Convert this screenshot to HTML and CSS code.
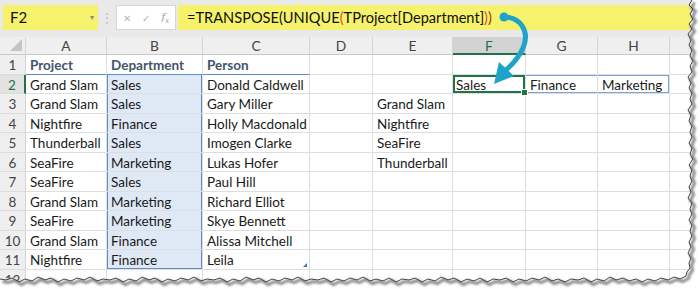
FILE: index.html
```html
<!DOCTYPE html>
<html lang="en">
<head>
  <meta charset="UTF-8" />
  <title>TRANSPOSE UNIQUE</title>
  <link rel="stylesheet" href="styles.css">
</head>
<body>
  <div class="window">
    <!-- Formula bar -->
    <div class="toolbar">
      <div class="namebox">F2<span class="caret">&#9662;</span></div>
      <div class="grip">&#8942;</div>
      <div class="fxbox">
        <span>&#10005;</span>
        <span>&#10003;</span>
        <span class="fx">f<sub>x</sub></span>
      </div>
      <div class="formula">=TRANSPOSE(UNIQUE<span class="p1">(</span>TProject[Department]<span class="p1">)</span><span class="p0">)</span></div>
    </div>

    <!-- Sheet -->
    <div class="sheet">
      <div class="hd corner"></div>
      <div class="hd">A</div><div class="hd">B</div><div class="hd">C</div><div class="hd">D</div>
      <div class="hd">E</div><div class="hd active">F</div><div class="hd">G</div><div class="hd">H</div><div class="hd"></div>

      <div class="rn">1</div>
      <div class="c th">Project</div><div class="c th">Department</div><div class="c th">Person</div>
      <div class="c"></div><div class="c"></div><div class="c"></div><div class="c"></div><div class="c"></div><div class="c"></div>

      <div class="rn active">2</div>
      <div class="c">Grand Slam</div><div class="c dep">Sales</div><div class="c">Donald Caldwell</div>
      <div class="c"></div><div class="c"></div><div class="c cur">Sales</div><div class="c spill">Finance</div><div class="c spill end">Marketing</div><div class="c"></div>

      <div class="rn">3</div>
      <div class="c">Grand Slam</div><div class="c dep">Sales</div><div class="c">Gary Miller</div>
      <div class="c"></div><div class="c">Grand Slam</div><div class="c"></div><div class="c"></div><div class="c"></div><div class="c"></div>

      <div class="rn">4</div>
      <div class="c">Nightfire</div><div class="c dep">Finance</div><div class="c">Holly Macdonald</div>
      <div class="c"></div><div class="c">Nightfire</div><div class="c"></div><div class="c"></div><div class="c"></div><div class="c"></div>

      <div class="rn">5</div>
      <div class="c">Thunderball</div><div class="c dep">Sales</div><div class="c">Imogen Clarke</div>
      <div class="c"></div><div class="c">SeaFire</div><div class="c"></div><div class="c"></div><div class="c"></div><div class="c"></div>

      <div class="rn">6</div>
      <div class="c">SeaFire</div><div class="c dep">Marketing</div><div class="c">Lukas Hofer</div>
      <div class="c"></div><div class="c">Thunderball</div><div class="c"></div><div class="c"></div><div class="c"></div><div class="c"></div>

      <div class="rn">7</div>
      <div class="c">SeaFire</div><div class="c dep">Sales</div><div class="c">Paul Hill</div>
      <div class="c"></div><div class="c"></div><div class="c"></div><div class="c"></div><div class="c"></div><div class="c"></div>

      <div class="rn">8</div>
      <div class="c">Grand Slam</div><div class="c dep">Marketing</div><div class="c">Richard Elliot</div>
      <div class="c"></div><div class="c"></div><div class="c"></div><div class="c"></div><div class="c"></div><div class="c"></div>

      <div class="rn">9</div>
      <div class="c">SeaFire</div><div class="c dep">Marketing</div><div class="c">Skye Bennett</div>
      <div class="c"></div><div class="c"></div><div class="c"></div><div class="c"></div><div class="c"></div><div class="c"></div>

      <div class="rn">10</div>
      <div class="c">Grand Slam</div><div class="c dep">Finance</div><div class="c">Alissa Mitchell</div>
      <div class="c"></div><div class="c"></div><div class="c"></div><div class="c"></div><div class="c"></div><div class="c"></div>

      <div class="rn">11</div>
      <div class="c">Nightfire</div><div class="c dep last">Finance</div><div class="c resize">Leila</div>
      <div class="c"></div><div class="c"></div><div class="c"></div><div class="c"></div><div class="c"></div><div class="c"></div>

      <div class="rn">12</div>
      <div class="c"></div><div class="c"></div><div class="c"></div><div class="c"></div><div class="c"></div>
      <div class="c"></div><div class="c"></div><div class="c"></div><div class="c"></div>
    </div>

    <!-- Callout arrow -->
    <svg class="overlay" width="700" height="289" viewBox="0 0 700 289">
      <circle cx="504" cy="17" r="4.5" fill="#1fa3c8"/>
      <path d="M504,17 C521,17 530,32 523,48 C519,57 513,64 506,70" fill="none" stroke="#1fa3c8" stroke-width="5" stroke-linecap="round"/>
      <polygon points="494,84 514,76 499,62" fill="#1fa3c8"/>
    </svg>

    <!-- Torn edge -->
    <svg class="overlay" width="700" height="289" viewBox="0 0 700 289">
      <defs>
        <filter id="soft"><feGaussianBlur stdDeviation="1.2"/></filter>
      </defs>
      <path fill="#fff" d="M700,0 L692,0 689,5 693,9 690,14 693,19 689,24 692,29 688,34 691,40 689,45 692,50 690,56 693,61 690,66 692,72 688,77 691,83 689,88 692,93 690,99 692,104 688,110 691,115 689,121 692,126 690,132 692,137 689,143 692,148 690,154 693,159 689,165 692,170 690,176 692,181 689,187 691,192 688,198 692,203 690,209 692,214 689,220 692,225 690,231 692,236 689,242 691,247 688,253 691,258 689,263 690,268 687,272 686,276 680,279 674,277 668,280 661,278 655,281 648,279 642,282 636,279 629,281 623,278 616,280 610,277 604,281 597,279 591,282 584,278 578,280 571,279 565,282 558,279 552,281 545,277 539,280 532,278 526,281 519,279 513,282 506,278 500,280 493,279 487,282 480,278 474,281 467,279 461,282 454,278 448,280 441,277 435,281 428,279 422,282 415,278 409,280 402,279 396,282 389,278 383,281 376,279 370,281 363,277 357,280 350,278 344,281 337,279 331,282 324,278 318,280 311,279 305,281 298,277 292,280 285,278 279,281 272,279 266,282 259,278 253,280 246,277 240,281 233,279 227,282 220,278 214,280 207,279 201,281 194,277 188,280 181,278 175,281 168,279 162,282 155,278 149,280 142,277 136,281 129,279 123,282 116,278 110,280 103,279 97,281 90,277 84,280 77,278 71,281 64,279 58,282 51,278 45,280 38,277 32,281 25,279 19,282 12,278 6,280 0,279 L0,289 L700,289 Z"/>
      <polyline id="edge" fill="none" points="692,0 689,5 693,9 690,14 693,19 689,24 692,29 688,34 691,40 689,45 692,50 690,56 693,61 690,66 692,72 688,77 691,83 689,88 692,93 690,99 692,104 688,110 691,115 689,121 692,126 690,132 692,137 689,143 692,148 690,154 693,159 689,165 692,170 690,176 692,181 689,187 691,192 688,198 692,203 690,209 692,214 689,220 692,225 690,231 692,236 689,242 691,247 688,253 691,258 689,263 690,268 687,272 686,276 680,279 674,277 668,280 661,278 655,281 648,279 642,282 636,279 629,281 623,278 616,280 610,277 604,281 597,279 591,282 584,278 578,280 571,279 565,282 558,279 552,281 545,277 539,280 532,278 526,281 519,279 513,282 506,278 500,280 493,279 487,282 480,278 474,281 467,279 461,282 454,278 448,280 441,277 435,281 428,279 422,282 415,278 409,280 402,279 396,282 389,278 383,281 376,279 370,281 363,277 357,280 350,278 344,281 337,279 331,282 324,278 318,280 311,279 305,281 298,277 292,280 285,278 279,281 272,279 266,282 259,278 253,280 246,277 240,281 233,279 227,282 220,278 214,280 207,279 201,281 194,277 188,280 181,278 175,281 168,279 162,282 155,278 149,280 142,277 136,281 129,279 123,282 116,278 110,280 103,279 97,281 90,277 84,280 77,278 71,281 64,279 58,282 51,278 45,280 38,277 32,281 25,279 19,282 12,278 6,280 0,279"/>
      <use href="#edge" class="edge-shadow" transform="translate(2.5,2.5)" filter="url(#soft)"/>
      <use href="#edge" class="edge-line"/>
    </svg>
  </div>
</body>
</html>
```

FILE: styles.css
```css
body {
  margin: 0;
  background: #fff;
  font-family: Lato, "Open Sans", sans-serif;
}
.window {
  position: relative;
  width: 700px;
  height: 289px;
  overflow: hidden;
  background: #e9e9e9;
}

/* formula bar */
.toolbar {
  display: flex;
  align-items: stretch;
  height: 25px;
  padding: 5px 0 6.5px 3px;
  border-top: 1px solid #c9c9c9;
  box-sizing: content-box;
  margin-top: -1px;
}
.namebox {
  width: 95px;
  box-sizing: border-box;
  background: #f6f26c;
  padding: 0 0 0 7px;
  font-size: 15px;
  line-height: 25px;
  color: #111;
  position: relative;
}
.caret {
  position: absolute;
  right: 4px;
  top: 0;
  font-size: 8px;
  color: #888;
}
.grip {
  width: 18px;
  text-align: center;
  color: #bbb;
  font-size: 12px;
  line-height: 25px;
}
.fxbox {
  width: 60px;
  box-sizing: border-box;
  background: #fff;
  border: 1px solid #d6d6d6;
  display: flex;
  justify-content: space-around;
  align-items: center;
  color: #b5b5b5;
  font-size: 10px;
}
.fx {
  font-family: "DejaVu Serif", serif;
  font-style: italic;
  font-size: 10px;
  color: #999;
}
.fx sub {
  font-size: 7px;
}
.formula {
  flex: 1;
  margin-left: 2px;
  background: #f6f26c;
  padding-left: 9px;
  font-size: 14.6px;
  line-height: 25px;
  color: #111;
  white-space: nowrap;
}
.p1 {
  color: #d4571a;
}
.p0 {
  color: #a8322a;
}

/* grid */
.sheet {
  display: grid;
  grid-template-columns: 26px 81px 96px 107px 63px 80px 73px 72px 72px 1fr;
  grid-template-rows: 18.5px repeat(12, 19.55px);
  background: #fff;
  font-size: 13.5px;
  color: #1a1a1a;
}
.hd,
.rn {
  background: #efefef;
  border-right: 1px solid #d4d4d4;
  border-bottom: 1px solid #c8c8c8;
  text-align: center;
  color: #444;
  line-height: 18px;
}
.hd {
  font-size: 13.8px;
}
.rn {
  line-height: 19px;
  padding-top: 1px;
  border-bottom-color: #dcdcdc;
}
.hd.active {
  background: #d3d3d3;
  color: #217346;
  border-bottom: 2px solid #217346;
}
.rn.active {
  background: #e2e2e2;
  color: #217346;
  border-right: 2px solid #217346;
}
.corner {
  position: relative;
}
.corner::after {
  content: "";
  position: absolute;
  right: 3px;
  bottom: 3px;
  border-style: solid;
  border-width: 0 0 12px 12px;
  border-color: transparent transparent #c4c4c4 transparent;
}
.c {
  border-right: 1px solid #dedede;
  border-bottom: 1px solid #dedede;
  padding: 1px 4px 0;
  line-height: 19px;
  white-space: nowrap;
  position: relative;
}
.th {
  font-weight: bold;
  color: #44546a;
  border-bottom-color: #5f8ccc;
}
.dep {
  background: #dfe8f5;
  box-shadow: inset 1px 0 #5f8ccc, inset -1px 0 #5f8ccc;
}
.dep.last {
  box-shadow: inset 1px 0 #5f8ccc, inset -1px 0 #5f8ccc, inset 0 -1px #5f8ccc;
}
.cur {
  box-shadow: inset 0 0 0 2px #217346;
  padding-left: 3px;
}
.cur::after {
  content: "";
  position: absolute;
  right: -3px;
  bottom: -3px;
  width: 5px;
  height: 5px;
  background: #217346;
  border: 1px solid #fff;
  z-index: 1;
}
.spill {
  box-shadow: inset 0 1px #7ca1d6, inset 0 -1px #7ca1d6;
}
.spill.end {
  box-shadow: inset 0 1px #7ca1d6, inset 0 -1px #7ca1d6, inset -1px 0 #7ca1d6;
}
.resize::after {
  content: "";
  position: absolute;
  right: 2px;
  bottom: 2px;
  border-style: solid;
  border-width: 0 0 4px 4px;
  border-color: transparent transparent #3d6fc2 transparent;
}

/* overlays */
.overlay {
  position: absolute;
  left: 0;
  top: 0;
  pointer-events: none;
}
.edge-shadow {
  stroke: #8a8a8a;
  stroke-width: 3;
}
.edge-line {
  stroke: #444;
  stroke-width: 1;
}
```
